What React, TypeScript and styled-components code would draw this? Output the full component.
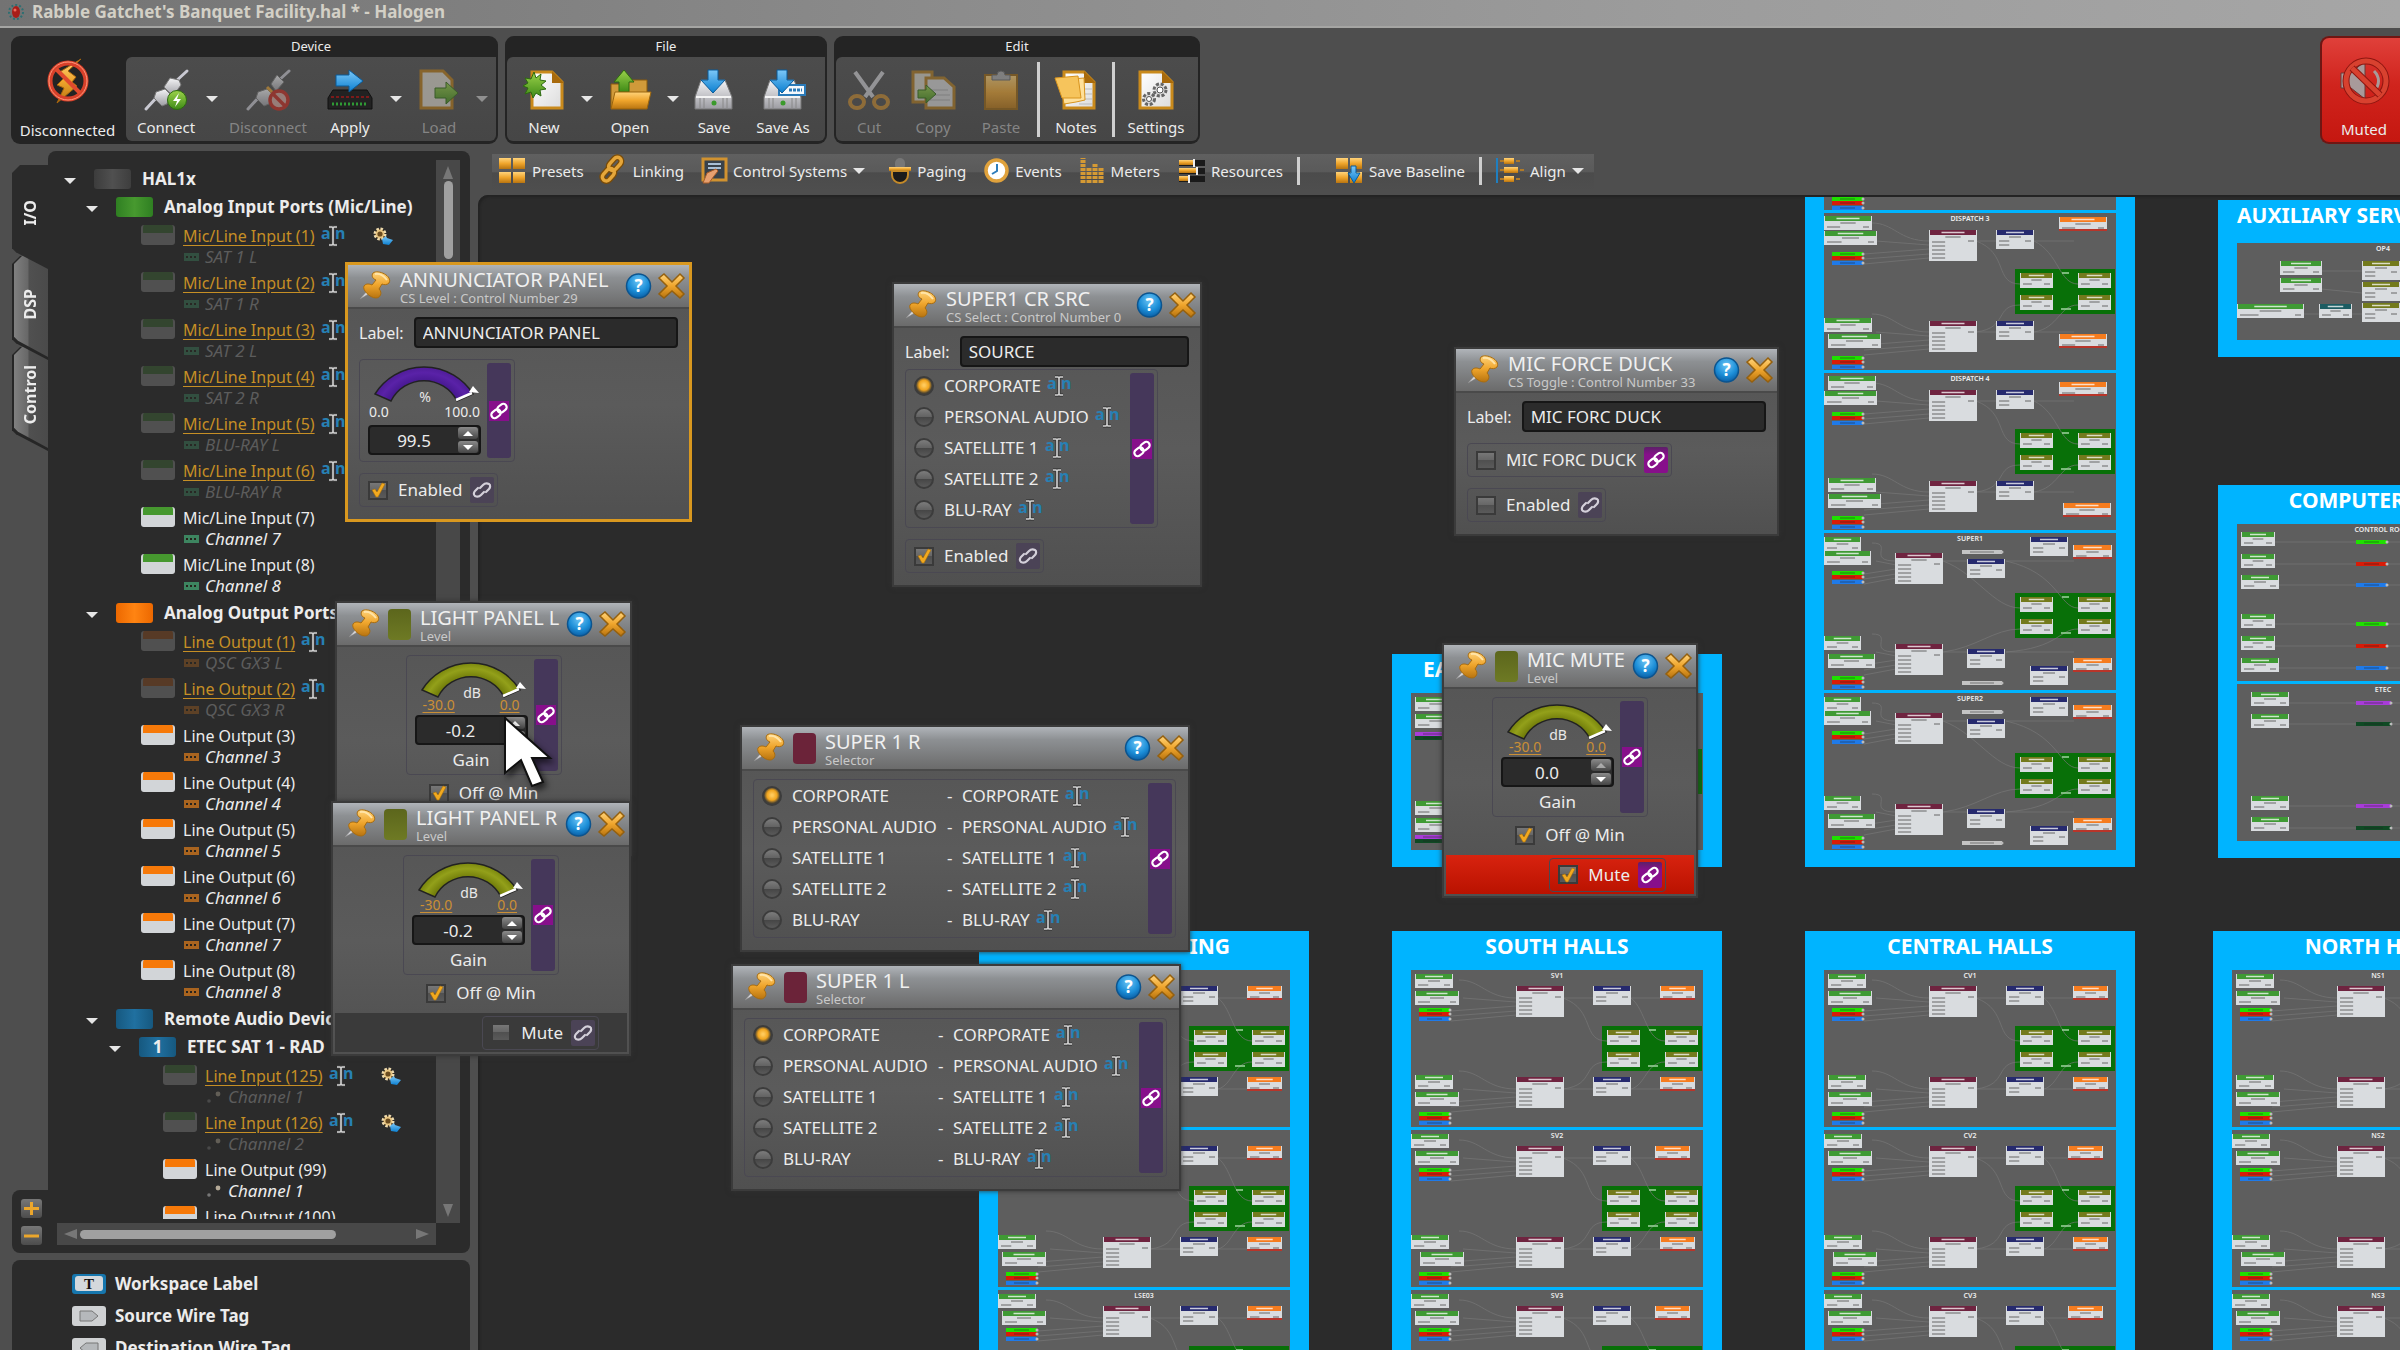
import React from "react";
import styled, { createGlobalStyle, css } from "styled-components";

const FONT = '"Noto Sans", "Open Sans", "Liberation Sans", sans-serif';

const Global = createGlobalStyle`
  * { box-sizing: border-box; }
  html, body { margin: 0; background: #4e4e4e; }
  body { font-family: ${FONT}; font-size: 16px; color: #ececec; overflow: hidden; }
  button, input { font-family: inherit; color: inherit; }
  button { border: 0; padding: 0; background: none; cursor: default; }
  svg { display: block; flex: none; overflow: visible; }
`;

/* ---------- shell ---------- */

const Shell = styled.div`
  position: relative;
  display: flex;
  flex-direction: column;
  height: 100vh;
  overflow: hidden;
  background: #4e4e4e;
`;

const TitleBar = styled.header`
  display: flex;
  align-items: center;
  gap: 8px;
  height: 28px;
  padding: 0 8px 2px;
  border-bottom: 2px solid #a5a5a3;
  background: linear-gradient(90deg, #737373, #8c8c8c 40%, #9c9c9c 70%, #a6a6a6);
  color: #d3d0c6;
  font-size: 17px;
  font-weight: 700;
  line-height: 20px;
`;

const Ribbon = styled.div`
  display: flex;
  gap: 7px;
  padding: 8px 0 0 11px;
  height: 116px;
`;

const RibbonGroup = styled.section`
  display: flex;
  padding: 0 2px 3px;
  border-radius: 9px;
  background: #242424;
`;

const GroupColumn = styled.div`
  display: flex;
  flex-direction: column;
`;

const GroupTitle = styled.h2`
  margin: 0;
  height: 21px;
  font-size: 13px;
  font-weight: 400;
  line-height: 20px;
  text-align: center;
`;

const GroupBody = styled.div`
  display: flex;
  flex: 1;
  padding: 0 4px;
  border-radius: 6px 0 6px 6px;
  background: linear-gradient(#4c4c4c, #464646);
`;

const ToolButton = styled.button<{ $w: number; $off?: boolean }>`
  display: flex;
  flex-direction: column;
  align-items: center;
  justify-content: space-between;
  width: ${(p) => p.$w}px;
  padding: 13px 0 4px;
  font-size: 15px;
  line-height: 20px;
  white-space: nowrap;
  color: ${(p) => (p.$off ? "#858585" : "#ececec")};
  svg { opacity: ${(p) => (p.$off ? 0.55 : 1)}; }
`;

const Drop = styled.button<{ $off?: boolean }>`
  width: 20px;
  display: grid;
  place-items: center;
  opacity: ${(p) => (p.$off ? 0.45 : 1)};
`;

const StatusBox = styled.div`
  display: flex;
  flex-direction: column;
  align-items: center;
  justify-content: space-between;
  width: 113px;
  padding: 23px 4px 1px 0;
  font-size: 15px;
  line-height: 20px;
`;

const Divider = styled.i<{ $m: number }>`
  width: 3px;
  margin: 5px ${(p) => p.$m}px 4px;
  background: #cfcfcf;
`;

const MutedButton = styled.button`
  display: flex;
  flex-direction: column;
  align-items: center;
  justify-content: space-between;
  width: 80px;
  margin-left: auto;
  padding: 18px 0 3px 6px;
  border: 2px solid #6f1613;
  border-right: 0;
  border-radius: 9px 0 0 9px;
  background: linear-gradient(#e0403a, #d0241d 45%, #c51710);
  font-size: 15px;
  line-height: 20px;
`;

const Main = styled.div`
  display: flex;
  flex: 1;
  min-height: 0;
`;

/* ---------- sidebar ---------- */

const Sidebar = styled.aside`
  display: flex;
  flex-direction: column;
  gap: 7px;
  width: 478px;
  padding: 7px 8px 0 12px;
`;

const TreeArea = styled.div`
  display: flex;
  flex: 1;
  min-height: 0;
`;

const Rail = styled.div`
  display: flex;
  flex-direction: column;
  width: 36px;
  padding-top: 14px;
`;

const Tab = styled.button<{ $active?: boolean; $z: number }>`
  position: relative;
  z-index: ${(p) => p.$z};
  display: grid;
  place-items: center;
  height: 104px;
  margin-bottom: -13px;
  padding-bottom: 8px;
  background: #262626;
  clip-path: polygon(0 8px, 8px 0, 100% 0, 100% 100%, 4px 84%, 0 80%);
  span {
    position: relative;
    writing-mode: vertical-rl;
    transform: rotate(180deg);
    font-size: 16px;
    font-weight: 700;
    line-height: 20px;
  }
  ${(p) =>
    p.$active
      ? css`background: #2b2b2b;`
      : css`
          &::before {
            content: "";
            position: absolute;
            inset: 0 0 3px 2px;
            background: linear-gradient(90deg, #808080, #686868 40%, #505050 45%, #4a4a4a);
            clip-path: polygon(0 8px, 8px 0, 100% 0, 100% 100%, 4px 84%, 0 80%);
          }
        `}
`;

const RailFoot = styled.div`
  display: flex;
  flex-direction: column;
  gap: 8px;
  margin-top: auto;
  padding: 9px 6px 8px 9px;
  height: 63px;
  border-radius: 8px 0 0 8px;
  background: #2b2b2b;
`;

const ZoomButton = styled.button`
  display: grid;
  place-items: center;
  width: 21px;
  height: 19px;
  border-radius: 3px;
  background: linear-gradient(#777, #4c4c4c);
`;

const TreePanel = styled.div`
  display: flex;
  flex: 1;
  flex-direction: column;
  min-width: 0;
  padding: 0 10px 8px 9px;
  border-radius: 8px 8px 8px 0;
  background: #2b2b2b;
`;

const TreeBody = styled.div`
  display: flex;
  flex: 1;
  min-height: 0;
`;

const Tree = styled.div`
  flex: 1;
  min-width: 0;
  margin-bottom: 4px;
  padding-top: 15px;
  overflow: hidden;
  white-space: nowrap;
`;

const VTrack = styled.div`
  display: flex;
  flex-direction: column;
  align-items: center;
  width: 24px;
  margin-top: 9px;
  padding: 5px 0;
  background: #484848;
`;

const HTrack = styled.div`
  display: flex;
  align-items: center;
  height: 22px;
  margin-right: 24px;
  padding: 0 6px;
  background: #484848;
`;

const Thumb = styled.i<{ $vertical?: boolean }>`
  border-radius: 5px;
  background: #a0a0a0;
  ${(p) =>
    p.$vertical
      ? css`width: 9px; height: 78px; margin: 2px 0 auto;`
      : css`width: 256px; height: 9px; margin: 0 auto 0 3px;`}
`;

const Branch = styled.div<{ $pad: number }>`
  display: flex;
  align-items: center;
  height: 28px;
  padding: 0 0 2px ${(p) => p.$pad}px;
  font-size: 17px;
  font-weight: 700;
  line-height: 24px;
  svg { margin: 3px 18px 0 1px; }
`;

const Block = styled.span<{ $c: string }>`
  flex: none;
  width: 37px;
  height: 20px;
  margin-right: 11px;
  border-radius: 3px;
  background: ${(p) => p.$c};
  line-height: 20px;
  text-align: center;
`;

const Port = styled.div<{ $pad: number; $dim?: boolean }>`
  display: grid;
  grid-template-columns: 34px auto;
  column-gap: 8px;
  height: 47px;
  padding-left: ${(p) => p.$pad}px;
  align-content: start;
`;

const PortIcon = styled.span<{ $c: string; $dim?: boolean }>`
  height: 20px;
  margin-top: 3px;
  border: solid #d2d5d8;
  border-width: 0 2px;
  border-radius: 3px;
  background: linear-gradient(${(p) => p.$c} 8px, #d2d5d8 8px);
  ${(p) => p.$dim && css`border-color: #505050; background: linear-gradient(${p.$c} 8px, #505050 8px);`}
`;

const PortLine = styled.div`
  display: flex;
  align-items: center;
  height: 27px;
  a { color: #c68f25; text-underline-offset: 3px; }
  svg { margin-left: 6px; }
  svg + svg { margin-left: 27px; }
`;

const ChannelLine = styled.div<{ $dim?: boolean }>`
  grid-column: 2;
  display: flex;
  align-items: center;
  gap: 6px;
  height: 16px;
  padding-left: 1px;
  font-size: 17px;
  font-style: italic;
  line-height: 16px;
  color: ${(p) => (p.$dim ? "#5c5c5c" : "#ececec")};
  svg { opacity: ${(p) => (p.$dim ? 0.4 : 1)}; }
`;

const Palette = styled.div`
  display: flex;
  flex-direction: column;
  gap: 10px;
  height: 90px;
  padding: 13px 0 0 60px;
  border-radius: 8px 8px 0 0;
  background: #2b2b2b;
  overflow: hidden;
`;

const PaletteItem = styled.div`
  display: flex;
  flex: none;
  align-items: center;
  gap: 9px;
  height: 22px;
  font-size: 17px;
  font-weight: 700;
  line-height: 22px;
`;

/* ---------- workspace ---------- */

const Work = styled.div`
  display: flex;
  flex: 1;
  flex-direction: column;
  min-width: 0;
`;

const SubBar = styled.nav`
  display: flex;
  align-items: center;
  align-self: flex-start;
  height: 36px;
  margin: 10px 0 5px 14px;
  padding: 0 10px 3px 7px;
  background: linear-gradient(#606060, #5a5a5a 50%, #4b4b4b 52%, #4e4e4e);
`;

const SubButton = styled.button<{ $gap?: number }>`
  display: flex;
  align-items: center;
  gap: 6px;
  margin-right: ${(p) => p.$gap ?? 18}px;
  font-size: 15px;
  line-height: 20px;
  white-space: nowrap;
`;

const SubDivider = styled.i<{ $m: number }>`
  width: 3px;
  height: 28px;
  margin-right: ${(p) => p.$m}px;
  background: #cfcfcf;
`;

const Canvas = styled.main`
  position: relative;
  flex: 1;
  overflow: hidden;
  border-radius: 10px 0 0 0;
  background: #2b2b2b;
  box-shadow: inset 2px 2px 2px #232323;
`;

const Zone = styled.section<{ $x: number; $y: number }>`
  position: absolute;
  left: ${(p) => p.$x}px;
  top: ${(p) => p.$y}px;
  width: 330px;
  padding: 0 19px 17px;
  background: #00b4ff;
`;

const ZoneTitle = styled.h3<{ $tall?: boolean; $align?: string; $pad?: number }>`
  margin: 0;
  height: ${(p) => (p.$tall ? 43 : 39)}px;
  padding: 0 ${(p) => p.$pad ?? 0}px;
  font-size: 21px;
  line-height: 30px;
  text-align: ${(p) => p.$align ?? "center"};
  white-space: nowrap;
  color: #fff;
`;

const Sheets = styled.div`
  display: flex;
  flex-direction: column;
  gap: 3px;
  svg { background: #5e5e5e; overflow: hidden; width: 100%; }
`;

/* ---------- floating windows ---------- */

const Win = styled.section<{ $x: number; $y: number; $w: number; $focus?: boolean }>`
  position: absolute;
  left: ${(p) => p.$x}px;
  top: ${(p) => p.$y}px;
  width: ${(p) => p.$w}px;
  background: linear-gradient(#545454, #5b5b5b 55%, #505050);
  ${(p) =>
    p.$focus
      ? css`border: 3px solid #d9981f;`
      : css`box-shadow: 0 0 0 2px #3b3b3b, 0 0 5px 2px #333;`}
`;

const WinHead = styled.header`
  display: flex;
  align-items: center;
  gap: 8px;
  height: 44px;
  padding: 0 4px 0 11px;
  border-bottom: 2px solid #4a4a4a;
  background: linear-gradient(#b0b4b9, #8d9093 30%, #6b6b6b);
`;

const Swatch = styled.i<{ $c: string }>`
  width: 23px;
  height: 31px;
  border-radius: 4px;
  background: ${(p) => p.$c};
`;

const Heading = styled.div`
  flex: 1;
  min-width: 0;
  padding-left: 1px;
  white-space: nowrap;
  h3 { margin: 0; font-size: 20px; font-weight: 400; line-height: 23px; color: #f0f0f0; }
  p { margin: 0; font-size: 13px; line-height: 14px; color: #c9c9c9; }
`;

const HeadButtons = styled.div`
  display: flex;
  gap: 6px;
`;

const WinBody = styled.div<{ $center?: boolean }>`
  display: flex;
  flex-direction: column;
  align-items: ${(p) => (p.$center ? "center" : "flex-start")};
  gap: ${(p) => (p.$center ? 3 : 11)}px;
  padding: ${(p) => (p.$center ? "8px 11px 5px" : "8px 11px 12px")};
`;

const Field = styled.label<{ $tight?: boolean }>`
  display: flex;
  align-items: center;
  align-self: stretch;
  gap: 10px;
  margin-bottom: ${(p) => (p.$tight ? -9 : 0)}px;
  font-size: 16px;
  input {
    flex: 1;
    min-width: 0;
    height: 31px;
    padding: 0 7px;
    border: 2px solid #161616;
    border-radius: 4px;
    background: #2b2b2b;
    font-size: 17px;
  }
`;

const Box = styled.div<{ $pad?: number }>`
  display: flex;
  padding-left: ${(p) => p.$pad ?? 0}px;
  border: 1px solid #4a4852;
  border-radius: 4px;
`;

const LinkBar = styled.button`
  display: grid;
  place-items: center;
  width: 24px;
  margin: 3px;
  border-radius: 3px;
  background: #45375a;
`;

const LinkTile = styled.span<{ $on?: boolean }>`
  display: grid;
  place-items: center;
  width: 20px;
  height: 20px;
  background: ${(p) => (p.$on ? "#870f8b" : "transparent")};
`;

const LinkButton = styled.button<{ $on?: boolean }>`
  display: grid;
  place-items: center;
  width: 24px;
  height: 26px;
  margin: 3px 3px 3px 8px;
  border-radius: 2px;
  background: ${(p) => (p.$on ? "linear-gradient(#5c2068, #870f8b 30%)" : "#4b4356")};
`;

const DialColumn = styled.div<{ $roomy?: boolean }>`
  display: flex;
  flex-direction: column;
  width: 121px;
  padding: 4px 0 ${(p) => (p.$roomy ? 6 : 0)}px 8px;
  margin-right: 3px;
`;

const Scale = styled.div<{ $roomy?: boolean; $link?: boolean }>`
  display: flex;
  justify-content: space-between;
  padding: 0 ${(p) => (p.$link ? 8 : 1)}px;
  margin-bottom: 3px;
  font-size: 14px;
  line-height: ${(p) => (p.$roomy ? 20 : 14)}px;
  a { color: #cb8f35; text-underline-offset: 2px; }
`;

const Spin = styled.div`
  display: flex;
  align-items: center;
  height: 30px;
  border: 2px solid #161616;
  border-radius: 4px;
  background: #2b2b2b;
  input {
    flex: 1;
    min-width: 0;
    border: 0;
    padding: 0;
    background: transparent;
    font-size: 17px;
    text-align: center;
  }
`;

const SpinButtons = styled.div`
  display: flex;
  flex-direction: column;
  gap: 2px;
  margin-right: 1px;
`;

const SpinButton = styled.button`
  display: grid;
  place-items: center;
  width: 20px;
  height: 12px;
  border-radius: 3px;
  background: linear-gradient(#8a8a8a, #454545);
  &:disabled svg { opacity: 0.45; }
`;

const Caption = styled.span`
  height: 29px;
  font-size: 17px;
  line-height: 30px;
  text-align: center;
`;

const Choice = styled.label`
  display: flex;
  align-items: center;
  gap: 10px;
  font-size: 17px;
  line-height: 30px;
  white-space: nowrap;
`;

const Tick = styled.span`
  display: grid;
  place-items: center;
  width: 20px;
  height: 19px;
  > * { grid-area: 1 / 1; }
  input {
    appearance: none;
    width: 20px;
    height: 19px;
    margin: 0;
    border: 2px solid #3a3a3a;
    background: linear-gradient(#777, #666 48%, #505050 50%, #5a5a5a);
  }
  svg { z-index: 1; pointer-events: none; }
  input:not(:checked) + svg { display: none; }
`;

const Radios = styled.fieldset`
  margin: 0;
  padding: 0 7px 2px 8px;
  border: 0;
`;

const RadioRow = styled.label`
  display: flex;
  align-items: center;
  height: 31px;
  font-size: 17px;
  line-height: 24px;
  white-space: nowrap;
  input {
    appearance: none;
    width: 20px;
    height: 20px;
    margin: 0 10px 0 0;
    border: 2px solid #3c3c3c;
    border-radius: 50%;
    background: linear-gradient(#7c7c7c, #636363 48%, #464646 52%, #5a5a5a);
  }
  input:checked { background: radial-gradient(circle at 50% 45%, #ffc95a 1px, #f0a41e 5px, #4a4334 8px); }
  svg { margin-left: 6px; }
`;

const RadioName = styled.span<{ $w?: number }>`
  width: ${(p) => (p.$w ? `${p.$w}px` : "auto")};
`;

const Dash = styled.span`
  width: 15px;
`;

const Strip = styled.footer<{ $red?: boolean }>`
  display: flex;
  justify-content: flex-end;
  align-items: center;
  height: 39px;
  margin: 0 2px 2px;
  padding-right: 28px;
  background: ${(p) => (p.$red ? "linear-gradient(#d8230f, #b91200)" : "#3a3a3a")};
`;

const Pointer = styled.svg`
  position: absolute;
  left: 504px;
  top: 716px;
  pointer-events: none;
  filter: drop-shadow(3px 4px 3px rgba(0, 0, 0, 0.6));
`;

/* ---------- small drawings ---------- */

const Defs = styled.svg`
  position: absolute;
`;

const Gradients = () => (
  <Defs width="0" height="0" aria-hidden="true">
    <defs>
      <linearGradient id="gold" x1="0" y1="0" x2="0" y2="1">
        <stop offset="0" stopColor="#ffd37a" /><stop offset="0.5" stopColor="#efa52c" /><stop offset="1" stopColor="#b87410" />
      </linearGradient>
      <linearGradient id="silver" x1="0" y1="0" x2="0" y2="1">
        <stop offset="0" stopColor="#f4f4f6" /><stop offset="1" stopColor="#9c9ca2" />
      </linearGradient>
      <linearGradient id="sky" x1="0" y1="0" x2="0" y2="1">
        <stop offset="0" stopColor="#7cc8f8" /><stop offset="1" stopColor="#0b7fd0" />
      </linearGradient>
      <linearGradient id="leaf" x1="0" y1="0" x2="0" y2="1">
        <stop offset="0" stopColor="#9bd24a" /><stop offset="1" stopColor="#3e8a16" />
      </linearGradient>
      <linearGradient id="paper" x1="0" y1="0" x2="1" y2="1">
        <stop offset="0" stopColor="#fff" /><stop offset="1" stopColor="#dcdcdc" />
      </linearGradient>
      <radialGradient id="help" cx="0.5" cy="0.3" r="0.7">
        <stop offset="0" stopColor="#6cc4f5" /><stop offset="0.6" stopColor="#1d8fd8" /><stop offset="1" stopColor="#0a5fa6" />
      </radialGradient>
      <radialGradient id="purple" gradientUnits="userSpaceOnUse" cx="56" cy="58" r="58">
        <stop offset="0.6" stopColor="#3a1280" /><stop offset="0.85" stopColor="#5a22a8" /><stop offset="1" stopColor="#4a1a90" />
      </radialGradient>
      <radialGradient id="olive" gradientUnits="userSpaceOnUse" cx="56" cy="58" r="58">
        <stop offset="0.6" stopColor="#5c6600" /><stop offset="0.85" stopColor="#93a01a" /><stop offset="1" stopColor="#707c08" />
      </radialGradient>
    </defs>
  </Defs>
);

const Caret = ({ size = 12, up = false, c = "#e6e6e6" }: { size?: number; up?: boolean; c?: string }) => (
  <svg width={size} height={size / 2} viewBox="0 0 12 6">
    <path d={up ? "M0 6h12L6 0z" : "M0 0h12L6 6z"} fill={c} />
  </svg>
);

const ScrollArrow = ({ d }: { d: string }) => (
  <svg width="14" height="14" viewBox="0 0 14 14"><path d={d} fill="#777" /></svg>
);

const AppIcon = () => (
  <svg width="16" height="20" viewBox="0 0 16 20">
    <circle cx="8" cy="10" r="7" fill="none" stroke="#2d6f72" strokeWidth="2" strokeDasharray="2 2" />
    <ellipse cx="8" cy="10" rx="4" ry="6" fill="#a81d18" /><circle cx="7" cy="8" r="1.5" fill="#f06a5a" />
  </svg>
);

const OfflineIcon = () => (
  <svg width="48" height="44" viewBox="0 0 48 44">
    <path d="M37 0L24 12l8 6-4 5 5 4-20 17 7-15-7-3 7-7-6-5z" fill="url(#gold)" stroke="#a8640c" />
    <circle cx="24" cy="22" r="18" fill="none" stroke="#d8402a" strokeWidth="5" />
    <circle cx="24" cy="22" r="19" fill="none" stroke="#ff9a7c" strokeWidth="1" />
    <path d="M12 10l24 24" stroke="#e04a2e" strokeWidth="4" />
  </svg>
);

const Plug = ({ split }: { split?: boolean }) => (
  <>
    <path d="M2 39L14 26M31 12L43 1" stroke="#c9c9d2" strokeWidth="3" strokeLinecap="round" />
    <path d="M12 22l9-3 5 5-3 10-5 2-8-8z" fill="url(#silver)" stroke="#777" />
    <path d={split ? "M25 14l6-9 7 7-8 9z" : "M20 17l6-9 9 2 2 5-8 11z"} fill="url(#silver)" stroke="#777" />
    {split && <path d="M21 17l6 6" stroke="#e4a030" strokeWidth="3" />}
  </>
);

const ConnectIcon = () => (
  <svg width="44" height="40" viewBox="0 0 44 40">
    <Plug /><circle cx="33" cy="30" r="9.5" fill="url(#leaf)" stroke="#2d6a10" />
    <path d="M35 23l-6 8h4l-2 6 6-8h-4z" fill="#fff" />
  </svg>
);
const DisconnectIcon = () => (
  <svg width="44" height="40" viewBox="0 0 44 40">
    <Plug split /><circle cx="33" cy="30" r="9" fill="#d8a8a0" stroke="#c8281c" strokeWidth="3.5" />
    <path d="M27 24l12 12" stroke="#c8281c" strokeWidth="3.5" />
  </svg>
);
const ApplyIcon = () => (
  <svg width="46" height="40" viewBox="0 0 46 40">
    <path d="M6 20h34l5 8v11H1V28z" fill="#222" stroke="#111" />
    <path d="M4 27h38" stroke="#7c1a1a" strokeWidth="2" strokeDasharray="3 2" />
    <path d="M5 34h36" stroke="#2f9a35" strokeWidth="3" strokeDasharray="2 2" />
    <path d="M9 5h13V0l14 11-14 11v-6H9z" fill="url(#sky)" stroke="#0a5a98" />
  </svg>
);
const LoadIcon = () => (
  <svg width="42" height="40" viewBox="0 0 42 40">
    <path d="M3 1h22l9 9v28H3z" fill="#ddd8cc" stroke="#b87a14" strokeWidth="3" />
    <path d="M17 18h11v-6l12 11-12 11v-6H17z" fill="url(#leaf)" stroke="#2d6a10" />
  </svg>
);
const Sheet = ({ x = 0, w = 34 }: { x?: number; w?: number }) => (
  <>
    <path d={`M${x + 2} 2h${w - 14}l10 10v26h-${w - 4}z`} fill="url(#paper)" stroke="#c98a1c" strokeWidth="3" />
    <path d={`M${x + w - 12} 1v12h12z`} fill="#a86a0c" />
  </>
);
const NewIcon = () => (
  <svg width="42" height="40" viewBox="0 0 42 40">
    <Sheet x={7} />
    <path d="M11 2l2 6 5-4-1 6 6 1-5 4 5 4-6 1 1 6-5-3-3 5-2-6-6 2 3-6-5-2 5-3-3-5 6 1z" fill="url(#leaf)" stroke="#2d6a10" />
  </svg>
);
const OpenIcon = () => (
  <svg width="42" height="40" viewBox="0 0 42 40">
    <path d="M2 14h13l3-4h20v28H2z" fill="#d09a3a" stroke="#8a5a0c" />
    <path d="M15 0l10 12h-5v10H10V12H5z" fill="url(#leaf)" stroke="#2d6a10" />
    <path d="M6 22h36l-4 17H2z" fill="url(#gold)" stroke="#9a640c" />
  </svg>
);
const SaveIcon = ({ tag }: { tag?: boolean }) => (
  <svg width="42" height="40" viewBox="0 0 42 40">
    <path d="M8 10h24l7 17v12H2V27z" fill="url(#silver)" stroke="#777" />
    <path d="M3 27h35" stroke="#f4f4f4" strokeWidth="2" />
    <path d="M7 28v10M11 28v10M30 28v10M34 28v10" stroke="#888" />
    <circle cx="21" cy="33" r="2.5" fill="#3b9a2c" />
    {tag && <><rect x="17" y="15" width="26" height="10" fill="#f4f8fc" stroke="#2a7ab8" strokeWidth="2" /><path d="M27 20h13" stroke="#2a7ab8" strokeWidth="3" strokeDasharray="3 1" /></>}
    <path d="M15 0h10v10h7L20 23 8 10h7z" fill="url(#sky)" stroke="#0a5a98" />
  </svg>
);
const CutIcon = () => (
  <svg width="42" height="40" viewBox="0 0 42 40">
    <path d="M7 2l18 25M35 2L17 27" stroke="#d0d0d4" strokeWidth="4" />
    <ellipse cx="9" cy="32" rx="7" ry="6" fill="none" stroke="#c88a2c" strokeWidth="4" />
    <ellipse cx="33" cy="32" rx="7" ry="6" fill="none" stroke="#c88a2c" strokeWidth="4" />
  </svg>
);
const CopyIcon = () => (
  <svg width="44" height="40" viewBox="0 0 44 40">
    <path d="M2 2h19v30H2z" fill="#d8d4c8" stroke="#b07a1c" strokeWidth="3" />
    <path d="M15 8h18l10 9v21H15z" fill="#d8d8d8" stroke="#b07a1c" strokeWidth="3" />
    <path d="M19 20h18M19 25h20M19 30h20" stroke="#aaa" />
    <path d="M7 20h8v-5l10 9-10 9v-5H7z" fill="url(#leaf)" stroke="#2d6a10" />
  </svg>
);
const PasteIcon = () => (
  <svg width="36" height="40" viewBox="0 0 36 40">
    <path d="M2 5h32v34H2z" fill="url(#gold)" stroke="#9a640c" strokeWidth="2" />
    <path d="M9 10V5h5a4 4 0 018 0h5v5z" fill="#aaa" stroke="#666" />
  </svg>
);
const NotesIcon = () => (
  <svg width="42" height="40" viewBox="0 0 42 40">
    <Sheet x={7} />
    <path d="M28 19h9M28 24h9M28 29h9M24 34h13" stroke="#bbb" />
    <path d="M5 10l24-2 1 22-9 2-12 2z" fill="#ffe09a" stroke="#d8941e" />
    <path d="M0 8l23-2 3 22H7z" fill="#f6c45c" stroke="#d8941e" />
  </svg>
);
const SettingsIcon = () => (
  <svg width="38" height="40" viewBox="0 0 38 40">
    <Sheet x={1} w={36} />
    <circle cx="23" cy="20" r="6" fill="#ddd" stroke="#666" strokeWidth="3" strokeDasharray="3 1.7" />
    <circle cx="23" cy="20" r="3" fill="#fff" stroke="#555" />
    <circle cx="12" cy="29" r="5.5" fill="#ddd" stroke="#666" strokeWidth="3" strokeDasharray="3 1.7" />
    <circle cx="12" cy="29" r="2.5" fill="#fff" stroke="#555" />
  </svg>
);
const MutedIcon = () => (
  <svg width="56" height="50" viewBox="0 0 56 50">
    <path d="M5 17h10l14-12v38L15 32H5z" fill="#a89a9a" stroke="#6a3a36" />
    <path d="M38 15c6 6 6 14 0 20M44 9c10 10 10 22 0 32" fill="none" stroke="#a89a9a" strokeWidth="3" />
    <circle cx="30" cy="25" r="20" fill="none" stroke="#8e1610" strokeWidth="7" />
    <circle cx="30" cy="25" r="20" fill="none" stroke="#d8412f" strokeWidth="5" />
    <path d="M16 12l28 27" stroke="#8e1610" strokeWidth="7" />
    <path d="M16 12l28 27" stroke="#d8412f" strokeWidth="5" />
  </svg>
);

const PresetsIcon = ({ drop }: { drop?: boolean }) => (
  <svg width="27" height="25" viewBox="0 0 27 25">
    {[[0, 0], [14, 0], [0, 14], [14, 14]].map(([x, y]) => (
      <rect key={`${x}-${y}`} x={x} y={y} width="12" height="11" fill="url(#gold)" />
    ))}
    {drop && <path d="M15 8h5v7h4l-6 10-6-10h3z" fill="url(#sky)" stroke="#0a5a98" />}
  </svg>
);
const LinkingIcon = () => (
  <svg width="27" height="25" viewBox="0 0 27 25">
    <g fill="none" stroke="#7a4c08" strokeWidth="6"><rect x="10" y="-5" width="8" height="15" rx="4" transform="rotate(42 14 7) translate(0 3)" /><rect x="5" y="10" width="8" height="14" rx="4" transform="rotate(42 9 16)" /></g>
    <g fill="none" stroke="#e5a63a" strokeWidth="3.5"><rect x="10" y="-5" width="8" height="15" rx="4" transform="rotate(42 14 7) translate(0 3)" /><rect x="5" y="10" width="8" height="14" rx="4" transform="rotate(42 9 16)" /></g>
  </svg>
);
const ControlIcon = () => (
  <svg width="25" height="25" viewBox="0 0 25 25">
    <rect x="1" y="1" width="23" height="21" fill="#39424a" stroke="#d09230" strokeWidth="3" />
    <path d="M6 6h13M6 10h13" stroke="#aac0d4" strokeWidth="2" />
    <path d="M1 25l4-10 9-4 2 2-4 5-5 7z" fill="#e6a070" stroke="#a85c28" />
  </svg>
);
const PagingIcon = () => (
  <svg width="22" height="25" viewBox="0 0 22 25">
    <rect x="6" y="0" width="10" height="12" rx="5" fill="#777" />
    <path d="M0 9h22v4H0z" fill="url(#gold)" /><path d="M3 13h16v4a8 8 0 01-16 0z" fill="#1c1c1c" stroke="#c58a28" strokeWidth="2" />
  </svg>
);
const ClockIcon = () => (
  <svg width="25" height="25" viewBox="0 0 25 25">
    <circle cx="12.5" cy="12.5" r="10.5" fill="#fff" stroke="#e0a23c" strokeWidth="3.5" /><path d="M13 6v7l-5 3" fill="none" stroke="#2f7dbb" strokeWidth="2" />
  </svg>
);
const MetersIcon = () => (
  <svg width="25" height="25" viewBox="0 0 25 25">
    {[25, 15, 20, 15].map((h, i) => (
      <path key={i} d={`M${3 + i * 6} 25v-${h}`} stroke="#d59a34" strokeWidth="5" strokeDasharray="3 1" />
    ))}
  </svg>
);
const ResourcesIcon = () => (
  <svg width="27" height="25" viewBox="0 0 27 25">
    {[[2, 15], [10, 18], [18, 10]].map(([y, w]) => (
      <g key={y}><rect x="1" y={y} width="26" height="6" fill="#1a1a1a" /><rect x="1" y={y} width={w} height="5" fill="url(#gold)" /><path d={`M${w + 1} ${y - 1}v8`} stroke="#eee" strokeWidth="2" /></g>
    ))}
  </svg>
);
const AlignIcon = () => (
  <svg width="28" height="25" viewBox="0 0 28 25">
    <path d="M1 0v25" stroke="#1f7fc0" strokeWidth="2" />
    <rect x="8" y="0" width="10" height="6" fill="url(#gold)" /><rect x="8" y="9" width="14" height="6" fill="url(#gold)" /><rect x="8" y="18" width="10" height="6" fill="url(#gold)" />
    <path d="M4 3h4M4 12h4M4 21h4M20 3h4M24 12h4M20 21h4" stroke="#b07a28" strokeWidth="2" />
  </svg>
);

const RenameIcon = () => (
  <svg width="25" height="20" viewBox="0 0 25 20" fontFamily={FONT} fontSize="16" fontWeight="700" fill="#2780b4">
    <text x="0" y="13">a</text><text x="14" y="13">n</text>
    <path d="M8 1h3l1 1 1-1h3M12 2v16M8 19h3l1-1 1 1h3" fill="none" stroke="#3a3a3a" strokeWidth="3.5" />
    <path d="M8 1h3l1 1 1-1h3M12 2v16M8 19h3l1-1 1 1h3" fill="none" stroke="#d2d2d2" strokeWidth="1.6" />
  </svg>
);
const GearIcon = () => (
  <svg width="20" height="18" viewBox="0 0 20 18">
    <circle cx="7" cy="7" r="5" fill="#6b4c20" stroke="#f0dcae" strokeWidth="3" strokeDasharray="2.4 1.5" />
    <circle cx="7" cy="7" r="3.4" fill="none" stroke="#e8c682" strokeWidth="1.6" />
    <path d="M9 12l4-3 1 2 6 2-4 5-6-1z" fill="url(#sky)" />
  </svg>
);
const ChipIcon = ({ c }: { c: string }) => (
  <svg width="15" height="8" viewBox="0 0 15 8">
    <rect width="15" height="8" fill={c} /><path d="M2 4h2M6 4h2M10 4h2" stroke="#26221c" strokeWidth="2" />
  </svg>
);
const DotsIcon = () => (
  <svg width="16" height="12" viewBox="0 0 16 12"><circle cx="3" cy="10" r="1.8" fill="#777" /><circle cx="12" cy="3" r="2.4" fill="#b5aa98" /></svg>
);

const PinIcon = () => (
  <svg width="32" height="30" viewBox="0 0 32 30">
    <path d="M1 28l9-10 3 3z" fill="#d8d8dc" stroke="#888" strokeWidth="0.5" />
    <path d="M14 2c5-4 20 3 16 10-2 2-5 2-7 1l-3 5c4 4 1 9-3 9-6 0-14-8-12-12 2-3 6-2 8-1l4-5c-3-1-5-4-3-7z" fill="url(#gold)" stroke="#a86c10" />
    <path d="M16 3c5-1 9 2 12 6" stroke="#ffe4a8" strokeWidth="2" fill="none" />
  </svg>
);
const HelpIcon = () => (
  <svg width="27" height="26" viewBox="0 0 27 26">
    <circle cx="13.5" cy="13" r="12" fill="url(#help)" stroke="#0c548e" strokeWidth="1.5" />
    <text x="13.5" y="19" textAnchor="middle" fontFamily={FONT} fontSize="17" fontWeight="700" fill="#fff">?</text>
  </svg>
);
const CloseIcon = () => (
  <svg width="27" height="26" viewBox="0 0 27 26">
    <path d="M1 5l5-4 8 8 8-8 4 4-8 8 8 8-4 4-8-7-8 7-5-4 8-8z" fill="url(#gold)" stroke="#94600f" strokeWidth="1.5" />
  </svg>
);
const ChainIcon = ({ open }: { open?: boolean }) => (
  <svg width="18" height="16" viewBox="0 0 18 16" fill="none" stroke={open ? "#d4d0da" : "#fff"} strokeWidth="2.2" strokeLinecap="round">
    {open ? (
      <>
        <path d="M7 6l3-3c2-2 4-2 6-1s1 4 0 5l-3 3" />
        <path d="M11 10l-3 3c-2 2-4 2-6 1s-1-4 0-5l3-3" />
      </>
    ) : (
      <>
        <rect x="7" y="1.8" width="10" height="6.8" rx="3.4" transform="rotate(-38 12 5.2)" />
        <rect x="1" y="7.4" width="10" height="6.8" rx="3.4" transform="rotate(-38 6 10.8)" />
      </>
    )}
  </svg>
);
const CheckIcon = () => (
  <svg width="14" height="14" viewBox="0 0 14 14">
    <path d="M1 7l3-1 2 3 5-9 3 1-7 13H5z" fill="#f2a91f" stroke="#a8700c" strokeWidth="0.6" />
  </svg>
);
const Dial = ({ fill, unit }: { fill: string; unit: string }) => (
  <svg width="113" height="38" viewBox="0 0 113 38">
    <path d="M7 30A58 58 0 01105 30L89 37A37 37 0 0023 37z" fill={`url(#${fill})`} stroke="#222" strokeWidth="1.5" />
    <path d="M88 36l16-7" stroke="#fff" strokeWidth="2.5" /><path d="M101 28l4-6 6 7z" fill="#fff" />
    <text x="57" y="38" textAnchor="middle" fontFamily={FONT} fontSize="14" fill="#e8e8e8">{unit}</text>
  </svg>
);

/* ---------- schematic sheets ---------- */

type N = [string, number, number, number];
const KIND: Record<string, { c: string; h: number }> = {
  in: { c: "#3f9a34", h: 14 },
  sel: { c: "#6f2440", h: 31 },
  rt: { c: "#262a6e", h: 19 },
  out: { c: "#f57c1f", h: 14 },
  mtr: { c: "#737a1c", h: 15 },
  lvl: { c: "#737a1c", h: 19 },
  dly: { c: "#1c5c62", h: 14 },
};
const TAG: Record<string, string> = { g: "#1fe000", r: "#d81c08", b: "#1f7ae8", p: "#a83cd8", d: "#0f4a24", w: "#c4c4c4" };

const Node = ({ n: [k, x, y, w] }: { n: N }) => {
  const t = TAG[k];
  if (t) return <g><rect x={x} y={y} width={w} height="4" fill={t} /><path d={`M${x + 8} ${y + 2}h${w - 16}`} stroke="#222" strokeOpacity="0.5" /><circle cx={x + w} cy={y + 2} r="1.5" fill="#bbb" /></g>;
  const { c, h } = KIND[k];
  const ports = k === "sel" ? [12, 16, 20, 24, 28] : k === "rt" || k === "lvl" ? [11, 15] : [11];
  return (
    <g>
      <rect x={x - 1} y={y} width={w + 2} height={h} fill="#d9dcdf" />
      <rect x={x} y={y} width={w} height="5" fill={c} />
      <path d={`M${x + w / 4} ${y + 2.5}h${w / 2}`} stroke="#fff" strokeOpacity="0.75" strokeWidth="1.5" />
      <path d={`M${x + w / 3} ${y + 7}h${w / 3}M${x + w - 8} ${y + 11}h6`} stroke="#666" />
      {ports.map((p) => <path key={p} d={`M${x + 2} ${y + p}h${w / 3.5}`} stroke="#666" />)}
      {k === "out" && <rect x={x - 1} y={y + 12} width={w + 2} height="2" fill="#b8352a" />}
    </g>
  );
};

const block = (y: number): N[] => [["mtr", 197, y + 4, 31], ["mtr", 255, y + 4, 31], ["mtr", 197, y + 26, 31], ["mtr", 255, y + 26, 31]];
const tags = (y: number): N[] => [["g", 8, y, 31], ["r", 8, y + 4, 31], ["b", 8, y + 9, 31]];

const dispatch = (a: number, b: number, o1: N, o2: N): N[] => [
  ["in", a, 3, 46], ["in", 1, 18, 51], ...tags(39), ["sel", 106, 17, 46], ["rt", 173, 17, 36], o1, ...block(56),
  ["in", b, 105, 46], ["in", 5, 121, 51], ...tags(143), ["sel", 106, 108, 46], ["rt", 173, 108, 36], o2,
];
const superS: N[] = [
  ["in", 1, 4, 35], ["in", 1, 18, 45], ...tags(38), ["sel", 72, 20, 46], ["w", 138, 17, 40], ["rt", 144, 26, 36], ["rt", 207, 4, 36], ["out", 250, 12, 37], ...block(60),
  ["in", 1, 103, 35], ["in", 5, 121, 45], ...tags(143), ["sel", 72, 111, 46], ["rt", 144, 116, 36], ["rt", 207, 133, 36], ["out", 250, 125, 37], ["w", 138, 148, 40],
];
const hall = (a: number, o: number, b: number, c: number): N[] => [
  ["in", a, 4, 36], ["in", 5, 21, 42], ...tags(38), ["sel", 106, 16, 46], ["rt", 183, 16, 36], ["out", o, 16, 33], ...block(56),
  ["in", b, 105, 36], ["in", c, 122, 42], ...tags(142), ["sel", 106, 107, 46], ["rt", 183, 107, 36], ["out", 250, 107, 33],
];

const wiresFor = (sel: number, rt: number, by: number) =>
  [0, 91]
    .map((o) => `M48 ${10 + o}C70 ${10 + o} ${sel - 30} ${28 + o} ${sel} ${28 + o}M52 ${28 + o}L${sel} ${32 + o}M40 ${41 + o}L${sel} ${36 + o}M40 ${46 + o}L${sel} ${41 + o}M40 ${51 + o}L${sel} ${45 + o}M${sel + 47} ${28 + o}H${rt}M${rt + 38} ${28 + o}H250`)
    .join("") + `M${sel + 47} 28C${sel + 80} 40 170 ${by + 15} 196 ${by + 15}M${rt + 38} 28C235 40 235 ${by + 15} 254 ${by + 15}M${sel + 47} 119C${sel + 80} 115 170 ${by + 36} 196 ${by + 36}M${rt + 38} 119C235 115 235 ${by + 36} 254 ${by + 36}`;

const SheetView = ({ title, nodes, by, wires, h = 157 }: { title?: string; nodes: N[]; by?: number; wires?: string; h?: number }) => (
  <svg height={h} viewBox={`0 0 292 ${h}`} preserveAspectRatio="xMinYMin slice">
    {by !== undefined && <rect x="191" y={by} width="100" height="45" fill="#087008" />}
    <path d={wires} fill="none" stroke="#777" strokeWidth="0.7" />
    {by !== undefined && <path d={`M238 ${by + 4}h7M237 ${by + 40}h10`} stroke="#9fd49f" strokeWidth="1.5" />}
    {title && <text x="146" y="8" textAnchor="middle" fontFamily={FONT} fontSize="7" fontWeight="600" fill="#eee">{title}</text>}
    {nodes.map((n, i) => <Node key={i} n={n} />)}
  </svg>
);

const Halls = ({ prefix }: { prefix: string }) => (
  <Sheets>
    <SheetView title={`${prefix}1`} by={56} nodes={hall(5, 250, 5, 5)} wires={wiresFor(105, 182, 56)} />
    <SheetView title={`${prefix}2`} by={56} nodes={hall(1, 245, 1, 10)} wires={wiresFor(105, 182, 56)} />
    <SheetView title={`${prefix}3`} by={56} nodes={hall(1, 245, 1, 10)} wires={wiresFor(105, 182, 56)} />
  </Sheets>
);

const eastNodes: N[] = [
  ["in", 5, 4, 40], ["in", 5, 21, 40], ["p", 4, 39, 40], ["d", 4, 43, 40],
  ["in", 5, 108, 40], ["in", 5, 125, 40], ["p", 4, 142, 40], ["d", 4, 146, 40],
];
const auxNodes: N[] = [["in", 44, 18, 40], ["in", 44, 35, 40], ["in", 1, 61, 65], ["lvl", 126, 18, 36], ["lvl", 126, 39, 36], ["lvl", 126, 60, 36], ["dly", 83, 61, 31]];
const ctlNodes: N[] = [["in", 5, 8, 32], ["in", 5, 30, 32], ["in", 5, 51, 36], ["in", 5, 90, 32], ["in", 5, 112, 32], ["in", 5, 134, 36], ["g", 119, 16, 31], ["r", 119, 38, 31], ["b", 119, 59, 31], ["g", 119, 98, 31], ["r", 119, 120, 31], ["b", 119, 142, 31]];
const etecNodes: N[] = [["in", 15, 8, 36], ["in", 15, 30, 36], ["in", 15, 112, 36], ["in", 15, 133, 36], ["p", 119, 17, 35], ["d", 119, 38, 35], ["p", 119, 120, 35], ["d", 119, 142, 35]];

const Zones = () => (
  <>
    <Zone $x={1327} $y={2}>
      <Sheets>
        <SheetView h={13} nodes={[["g", 8, 0, 31], ["r", 8, 4, 31], ["b", 8, 9, 31]]} />
        <SheetView title="DISPATCH 3" by={56} nodes={dispatch(1, 1, ["out", 236, 4, 46], ["out", 236, 121, 46])} wires={wiresFor(105, 172, 56)} />
        <SheetView title="DISPATCH 4" by={56} nodes={dispatch(5, 5, ["out", 236, 9, 46], ["out", 240, 130, 46])} wires={wiresFor(105, 172, 56)} />
        <SheetView title="SUPER1" by={60} nodes={superS} wires={wiresFor(72, 144, 60)} />
        <SheetView title="SUPER2" by={60} nodes={superS} wires={wiresFor(72, 144, 60)} />
      </Sheets>
    </Zone>
    <Zone $x={1740} $y={5}>
      <ZoneTitle $tall $align="left">AUXILIARY SERVICES</ZoneTitle>
      <Sheets><SheetView h={97} title="OP4" nodes={auxNodes} wires="M84 28H125M84 46L125 50M66 71H83M114 71H125" /></Sheets>
    </Zone>
    <Zone $x={1740} $y={290}>
      <ZoneTitle>COMPUTER ROOM</ZoneTitle>
      <Sheets>
        <SheetView title="CONTROL ROOM" nodes={ctlNodes} wires="M38 18H292M38 40H292M42 61H292M38 100H292M38 122H292M42 144H292" />
        <SheetView title="ETEC" nodes={etecNodes} wires="M52 19H292M52 40H292M52 122H292M52 144H292" />
      </Sheets>
    </Zone>
    <Zone $x={914} $y={459}>
      <ZoneTitle $align="left" $pad={12}>EA</ZoneTitle>
      <Sheets><SheetView by={56} nodes={eastNodes} /></Sheets>
    </Zone>
    <Zone $x={501} $y={736}>
      <ZoneTitle $align="right" $pad={60}>ING</ZoneTitle>
      <Sheets>
        <SheetView by={56} nodes={hall(5, 250, 5, 5)} wires={wiresFor(105, 182, 56)} />
        <SheetView by={56} nodes={hall(1, 250, 1, 5)} wires={wiresFor(105, 182, 56)} />
        <SheetView title="LSE03" by={56} nodes={hall(1, 250, 1, 5)} wires={wiresFor(105, 182, 56)} />
      </Sheets>
    </Zone>
    <Zone $x={914} $y={736}><ZoneTitle>SOUTH HALLS</ZoneTitle><Halls prefix="SV" /></Zone>
    <Zone $x={1327} $y={736}><ZoneTitle>CENTRAL HALLS</ZoneTitle><Halls prefix="CV" /></Zone>
    <Zone $x={1735} $y={736}><ZoneTitle>NORTH HALLS</ZoneTitle><Halls prefix="NS" /></Zone>
  </>
);

/* ---------- window parts ---------- */

const Head = ({ title, sub, swatch }: { title: string; sub: string; swatch?: string }) => (
  <WinHead>
    <PinIcon />
    {swatch && <Swatch $c={swatch} />}
    <Heading><h3>{title}</h3><p>{sub}</p></Heading>
    <HeadButtons>
      <button aria-label="Help"><HelpIcon /></button>
      <button aria-label="Close"><CloseIcon /></button>
    </HeadButtons>
  </WinHead>
);

const Check = ({ text, on, link, linked }: { text: string; on?: boolean; link?: boolean; linked?: boolean }) => {
  const choice = (
    <Choice>
      <Tick><input type="checkbox" defaultChecked={on} /><CheckIcon /></Tick>
      {text}
    </Choice>
  );
  if (!link) return choice;
  return (
    <Box $pad={8}>
      {choice}
      <LinkButton $on={linked} aria-label={`Link ${text}`}><ChainIcon open={!linked} /></LinkButton>
    </Box>
  );
};

const LinkStrip = () => <LinkBar aria-label="Linked"><LinkTile $on><ChainIcon /></LinkTile></LinkBar>;

const Spinner = ({ value, name, top }: { value: string; name: string; top?: boolean }) => (
  <Spin>
    <input aria-label={name} defaultValue={value} />
    <SpinButtons>
      <SpinButton aria-label="Increase" disabled={top}><Caret size={10} up c="#fff" /></SpinButton>
      <SpinButton aria-label="Decrease"><Caret size={10} c="#fff" /></SpinButton>
    </SpinButtons>
  </Spin>
);

const LevelWindow = ({ x, y, w, title, value, muted }: { x: number; y: number; w: number; title: string; value: string; muted?: boolean }) => (
  <Win $x={x} $y={y} $w={w}>
    <Head title={title} sub="Level" swatch="linear-gradient(#5c661c, #6e7a24)" />
    <WinBody $center>
      <Box>
        <DialColumn>
          <Dial fill="olive" unit="dB" />
          <Scale $link><a href="#min">-30.0</a><a href="#max">0.0</a></Scale>
          <Spinner value={value} name={`${title} gain`} top={muted} />
          <Caption>Gain</Caption>
        </DialColumn>
        <LinkStrip />
      </Box>
      <Check text="Off @ Min" on />
    </WinBody>
    <Strip $red={muted}><Check text="Mute" on={muted} link linked={muted} /></Strip>
  </Win>
);

const SOURCES = ["CORPORATE", "PERSONAL AUDIO", "SATELLITE 1", "SATELLITE 2", "BLU-RAY"];

const SourceList = ({ name, paired }: { name: string; paired?: boolean }) => (
  <Box>
    <Radios aria-label={name}>
      {SOURCES.map((s, i) => (
        <RadioRow key={s}>
          <input type="radio" name={name} defaultChecked={i === 0} />
          <RadioName $w={paired ? 155 : undefined}>{s}</RadioName>
          {paired && <><Dash>-</Dash><span>{s}</span></>}
          <RenameIcon />
        </RadioRow>
      ))}
    </Radios>
    <LinkStrip />
  </Box>
);

/* ---------- sidebar parts ---------- */

const TreeBranch = ({ pad, color, label, mark }: { pad: number; color: string; label: string; mark?: string }) => (
  <Branch $pad={pad}><Caret /><Block $c={color}>{mark}</Block>{label}</Branch>
);

type PortProps = { pad?: number; name: string; channel: string; kind: "in" | "out"; dim?: boolean; gear?: boolean; remote?: boolean };
const TreePort = ({ pad = 84, name, channel, kind, dim, gear, remote }: PortProps) => {
  const color = kind === "in" ? (dim ? "#33452f" : "#46982f") : dim ? "#573a26" : "#f67909";
  return (
    <Port $pad={pad}>
      <PortIcon $c={color} $dim={dim} />
      <PortLine>
        {dim ? <a href="#port">{name}</a> : name}
        {dim && <RenameIcon />}
        {gear && <GearIcon />}
      </PortLine>
      <ChannelLine $dim={dim}>
        {remote ? <DotsIcon /> : <ChipIcon c={kind === "in" ? "#3d8560" : "#a9641f"} />}
        {channel}
      </ChannelLine>
    </Port>
  );
};

const INPUTS = ["SAT 1 L", "SAT 1 R", "SAT 2 L", "SAT 2 R", "BLU-RAY L", "BLU-RAY R", "Channel 7", "Channel 8"];
const OUTPUTS = ["QSC GX3 L", "QSC GX3 R", "Channel 3", "Channel 4", "Channel 5", "Channel 6", "Channel 7", "Channel 8"];

const Ports = styled.div`
  padding-bottom: 2px;
`;

const TagIcon = ({ kind }: { kind: "label" | "source" | "dest" }) => (
  <svg width="34" height="20" viewBox="0 0 34 20">
    <rect width="34" height="20" rx="3" fill={kind === "label" ? "#1676ad" : "#cfd1d3"} />
    {kind === "label" && <><rect x="3" y="2" width="28" height="15" rx="3" fill="#d4d8dc" /><text x="17" y="15" textAnchor="middle" fontFamily="Liberation Serif, serif" fontWeight="700" fontSize="15" fill="#111">T</text></>}
    {kind === "source" && <path d="M8 5h12l6 5-6 5H8z" fill="#b5b8bb" stroke="#777" strokeLinejoin="round" />}
    {kind === "dest" && <path d="M26 5H14l-6 5 6 5h12z" fill="#b5b8bb" stroke="#777" strokeLinejoin="round" />}
  </svg>
);

export default function App() {
  return (
    <Shell>
      <Global />
      <Gradients />
      <TitleBar><AppIcon />Rabble Gatchet's Banquet Facility.hal * - Halogen</TitleBar>

      <Ribbon>
        <RibbonGroup>
          <StatusBox><OfflineIcon />Disconnected</StatusBox>
          <GroupColumn>
            <GroupTitle>Device</GroupTitle>
            <GroupBody>
              <ToolButton $w={72}><ConnectIcon />Connect</ToolButton><Drop aria-label="Connect options"><Caret /></Drop>
              <ToolButton $w={92} $off><DisconnectIcon />Disconnect</ToolButton>
              <ToolButton $w={72}><ApplyIcon />Apply</ToolButton><Drop aria-label="Apply options"><Caret /></Drop>
              <ToolButton $w={66} $off><LoadIcon />Load</ToolButton><Drop $off aria-label="Load options"><Caret /></Drop>
            </GroupBody>
          </GroupColumn>
        </RibbonGroup>
        <RibbonGroup>
          <GroupColumn>
            <GroupTitle>File</GroupTitle>
            <GroupBody>
              <ToolButton $w={66}><NewIcon />New</ToolButton><Drop aria-label="New options"><Caret /></Drop>
              <ToolButton $w={66}><OpenIcon />Open</ToolButton><Drop aria-label="Open options"><Caret /></Drop>
              <ToolButton $w={62}><SaveIcon />Save</ToolButton>
              <ToolButton $w={76}><SaveIcon tag />Save As</ToolButton>
            </GroupBody>
          </GroupColumn>
        </RibbonGroup>
        <RibbonGroup>
          <GroupColumn>
            <GroupTitle>Edit</GroupTitle>
            <GroupBody>
              <ToolButton $w={58} $off><CutIcon />Cut</ToolButton>
              <ToolButton $w={70} $off><CopyIcon />Copy</ToolButton>
              <ToolButton $w={66} $off><PasteIcon />Paste</ToolButton>
              <Divider $m={3} />
              <ToolButton $w={66}><NotesIcon />Notes</ToolButton>
              <Divider $m={3} />
              <ToolButton $w={76}><SettingsIcon />Settings</ToolButton>
            </GroupBody>
          </GroupColumn>
        </RibbonGroup>
        <MutedButton><MutedIcon />Muted</MutedButton>
      </Ribbon>

      <Main>
        <Sidebar>
          <TreeArea>
            <Rail>
              <Tab $active $z={3}><span>I/O</span></Tab>
              <Tab $z={2}><span>DSP</span></Tab>
              <Tab $z={1}><span>Control</span></Tab>
              <RailFoot>
                <ZoomButton aria-label="Expand all"><svg width="15" height="13"><path d="M0 6.5h15M7.5 0v13" stroke="#eba62c" strokeWidth="3" /></svg></ZoomButton>
                <ZoomButton aria-label="Collapse all"><svg width="15" height="4"><path d="M0 2h15" stroke="#eba62c" strokeWidth="3" /></svg></ZoomButton>
              </RailFoot>
            </Rail>
            <TreePanel>
              <TreeBody>
                <Tree>
                  <TreeBranch pad={6} color="linear-gradient(90deg, #3c3c3c, #505050, #3e3e3e)" label="HAL1x" />
                  <TreeBranch pad={28} color="linear-gradient(90deg, #2f7f22, #47992f, #2f7f22)" label="Analog Input Ports (Mic/Line)" />
                  <Ports>
                    {INPUTS.map((c, i) => (
                      <TreePort key={c} kind="in" name={`Mic/Line Input (${i + 1})`} channel={c} dim={i < 6} gear={i === 0} />
                    ))}
                  </Ports>
                  <TreeBranch pad={28} color="linear-gradient(90deg, #ec6800, #ff8412, #ec6800)" label="Analog Output Ports (Line)" />
                  <Ports>
                    {OUTPUTS.map((c, i) => (
                      <TreePort key={c} kind="out" name={`Line Output (${i + 1})`} channel={c} dim={i < 2} />
                    ))}
                  </Ports>
                  <TreeBranch pad={28} color="linear-gradient(90deg, #16587f, #2070a0, #16587f)" label="Remote Audio Devices" />
                  <TreeBranch pad={51} color="linear-gradient(90deg, #16587f, #2070a0, #16587f)" label="ETEC SAT 1 - RAD" mark="1" />
                  <TreePort pad={106} kind="in" name="Line Input (125)" channel="Channel 1" dim gear remote />
                  <TreePort pad={106} kind="in" name="Line Input (126)" channel="Channel 2" dim gear remote />
                  <TreePort pad={106} kind="out" name="Line Output (99)" channel="Channel 1" remote />
                  <TreePort pad={106} kind="out" name="Line Output (100)" channel="Channel 2" remote />
                </Tree>
                <VTrack>
                  <ScrollArrow d="M2 14h10L7 1z" />
                  <Thumb $vertical />
                  <ScrollArrow d="M2 0h10L7 13z" />
                </VTrack>
              </TreeBody>
              <HTrack>
                <ScrollArrow d="M14 2v10L1 7z" />
                <Thumb />
                <ScrollArrow d="M0 2v10l13-5z" />
              </HTrack>
            </TreePanel>
          </TreeArea>
          <Palette>
            <PaletteItem><TagIcon kind="label" />Workspace Label</PaletteItem>
            <PaletteItem><TagIcon kind="source" />Source Wire Tag</PaletteItem>
            <PaletteItem><TagIcon kind="dest" />Destination Wire Tag</PaletteItem>
          </Palette>
        </Sidebar>

        <Work>
          <SubBar>
            <SubButton $gap={16}><PresetsIcon />Presets</SubButton>
            <SubButton><LinkingIcon />Linking</SubButton>
            <SubButton $gap={24}><ControlIcon />Control Systems <Caret /></SubButton>
            <SubButton><PagingIcon />Paging</SubButton>
            <SubButton><ClockIcon />Events</SubButton>
            <SubButton><MetersIcon />Meters</SubButton>
            <SubButton $gap={14}><ResourcesIcon />Resources</SubButton>
            <SubDivider $m={36} />
            <SubButton $gap={14}><PresetsIcon drop />Save Baseline</SubButton>
            <SubDivider $m={14} />
            <SubButton $gap={0}><AlignIcon />Align <Caret /></SubButton>
          </SubBar>
          <Canvas><Zones /></Canvas>
        </Work>
      </Main>

      <Win $x={345} $y={262} $w={347} $focus>
        <Head title="ANNUNCIATOR PANEL" sub="CS Level : Control Number 29" />
        <WinBody>
          <Field>Label:<input defaultValue="ANNUNCIATOR PANEL" /></Field>
          <Box>
            <DialColumn $roomy>
              <Dial fill="purple" unit="%" />
              <Scale $roomy><span>0.0</span><span>100.0</span></Scale>
              <Spinner value="99.5" name="Annunciator level" />
            </DialColumn>
            <LinkStrip />
          </Box>
          <Check text="Enabled" on link />
        </WinBody>
      </Win>

      <Win $x={894} $y={284} $w={306}>
        <Head title="SUPER1 CR SRC" sub="CS Select : Control Number 0" />
        <WinBody>
          <Field $tight>Label:<input defaultValue="SOURCE" /></Field>
          <SourceList name="super1-cr" />
          <Check text="Enabled" on link />
        </WinBody>
      </Win>

      <Win $x={1456} $y={349} $w={321}>
        <Head title="MIC FORCE DUCK" sub="CS Toggle : Control Number 33" />
        <WinBody>
          <Field>Label:<input defaultValue="MIC FORC DUCK" /></Field>
          <Check text="MIC FORC DUCK" link linked />
          <Check text="Enabled" link />
        </WinBody>
      </Win>

      <LevelWindow x={337} y={603} w={293} title="LIGHT PANEL L" value="-0.2" />
      <LevelWindow x={333} y={803} w={296} title="LIGHT PANEL R" value="-0.2" />
      <LevelWindow x={1444} y={645} w={252} title="MIC MUTE" value="0.0" muted />

      <Win $x={742} $y={727} $w={446}>
        <Head title="SUPER 1 R" sub="Selector" swatch="#6b2339" />
        <WinBody><SourceList name="super-1-r" paired /></WinBody>
      </Win>
      <Win $x={733} $y={966} $w={446}>
        <Head title="SUPER 1 L" sub="Selector" swatch="#6b2339" />
        <WinBody><SourceList name="super-1-l" paired /></WinBody>
      </Win>

      <Pointer width="46" height="72" viewBox="0 0 46 72">
        <path d="M1 2v55l16-13 11 26 11-4-11-24h18z" fill="#fff" stroke="#111" strokeWidth="2" />
      </Pointer>
    </Shell>
  );
}
